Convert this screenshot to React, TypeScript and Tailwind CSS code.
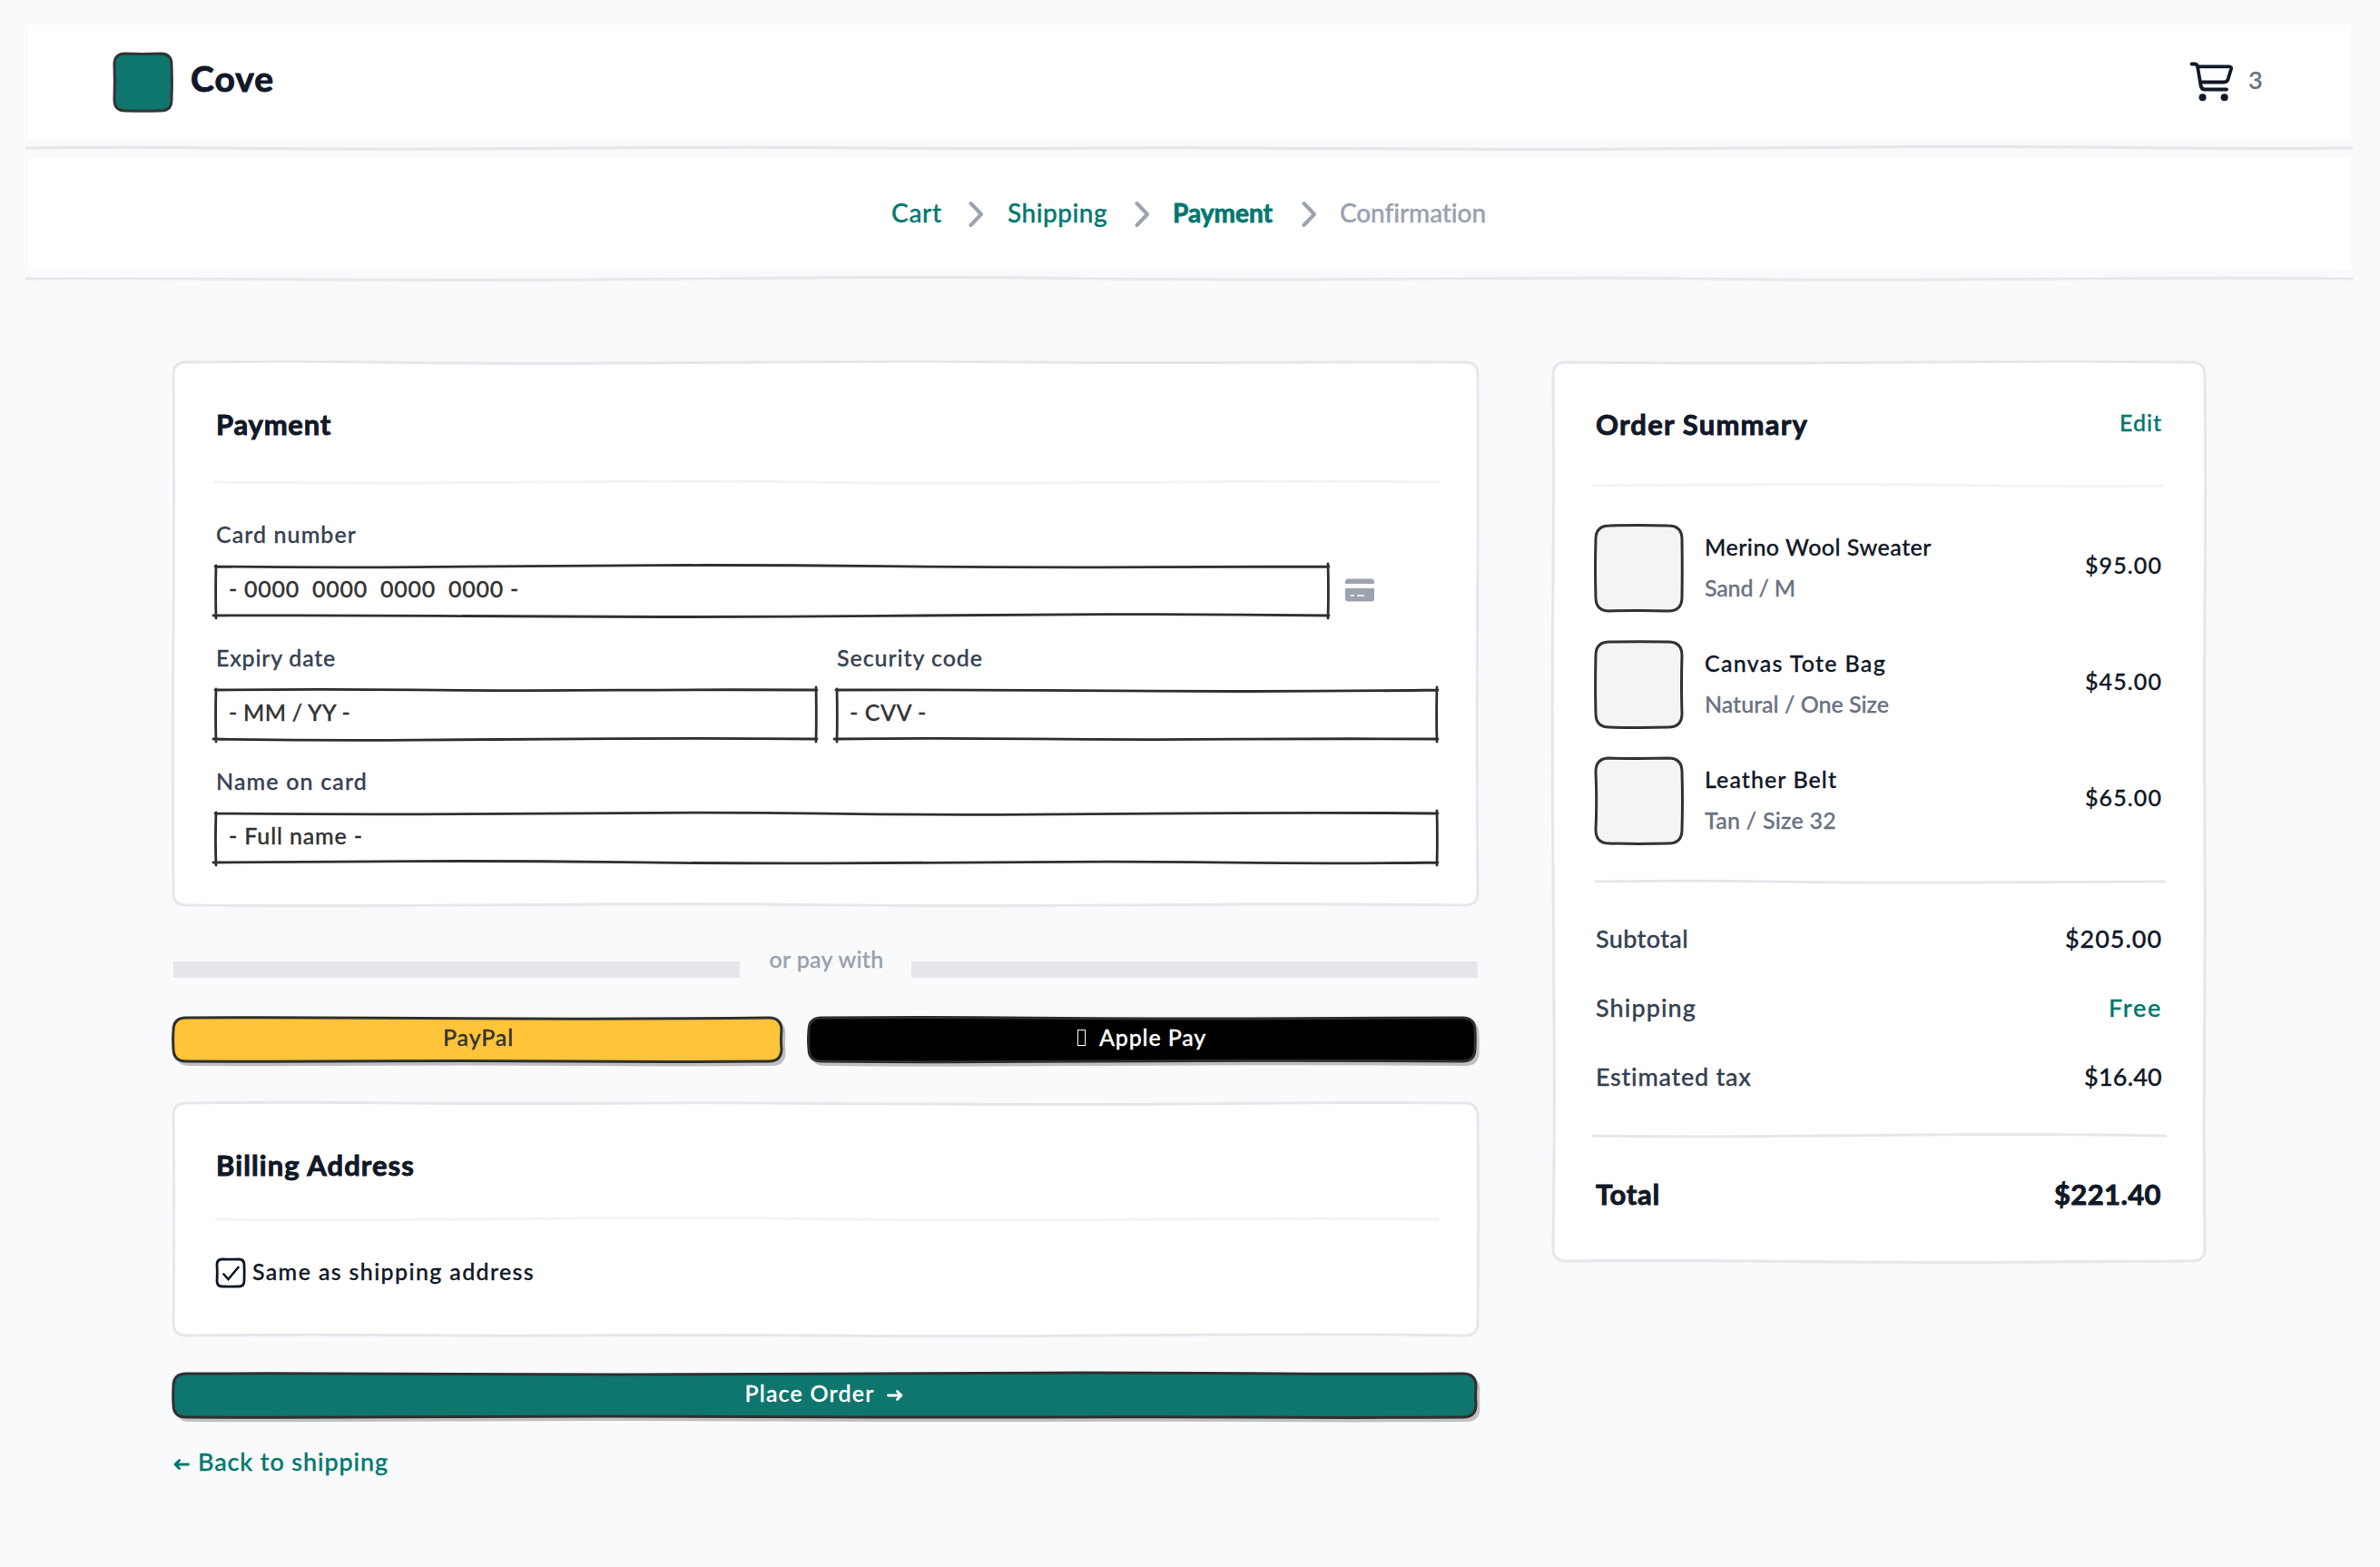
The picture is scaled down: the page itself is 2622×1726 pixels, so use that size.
import { useLayoutEffect, useRef, useState } from "react";
import clsx from "clsx";

const INK = "#2f2f2f";
const LINE = "#e5e7eb";
const FAINT = "#f3f4f6";

// sideways offsets for the hand drawn edges
const WOBBLE = [1.6, -1, -1.8, 1.2, 0.6, -1.4, 1.8, 0.4, -1.2, 1, -0.6, 1.4];

// wavy line from the current point to x2,y2
function edge(x1: number, y1: number, x2: number, y2: number, seed: number, amp = 1) {
  const dx = x2 - x1;
  const dy = y2 - y1;
  const len = Math.hypot(dx, dy);
  const n = Math.max(1, Math.round(len / 240));
  const at = (i: number) => {
    const t = (i + 0.5) / n;
    const o = WOBBLE[(seed * 5 + i) % WOBBLE.length] * amp;
    return [x1 + dx * t - (dy / len) * o, y1 + dy * t + (dx / len) * o];
  };
  let d = "";
  for (let i = 0; i < n; i++) {
    const [cx, cy] = at(i);
    if (i === n - 1) {
      d += `Q${cx} ${cy} ${x2} ${y2}`;
    } else {
      const [nx, ny] = at(i + 1);
      d += `Q${cx} ${cy} ${(cx + nx) / 2} ${(cy + ny) / 2}`;
    }
  }
  return d;
}

function roundedPath(w: number, h: number, r: number, seed: number, amp: number) {
  return [
    `M${r} 0`,
    edge(r, 0, w - r, 0, seed, amp),
    `Q${w} 0 ${w} ${r}`,
    edge(w, r, w, h - r, seed + 1, amp),
    `Q${w} ${h} ${w - r} ${h}`,
    edge(w - r, h, r, h, seed + 2, amp),
    `Q0 ${h} 0 ${h - r}`,
    edge(0, h - r, 0, r, seed + 3, amp),
    `Q0 0 ${r} 0Z`,
  ].join(" ");
}

// four separate strokes that overshoot the corners a little
function inputPath(w: number, h: number, seed: number) {
  return [
    "M-1 0" + edge(-1, 0, w + 1, 0, seed),
    `M${w} -3` + edge(w, -3, w, h + 3, seed + 1, 0.6),
    `M-3 ${h}` + edge(-3, h, w + 1, h, seed + 2),
    "M0 -1" + edge(0, -1, 0, h + 3, seed + 3, 0.6),
  ].join(" ");
}

type FrameProps = {
  w: number;
  h: number;
  r?: number;
  seed?: number;
  amp?: number;
  fill?: string;
  stroke?: string;
  shadow?: boolean;
  sw?: number;
};

function Frame({ w, h, r = 14, seed = 0, amp = 1, fill = "#fff", stroke = LINE, shadow, sw = 3 }: FrameProps) {
  const d = roundedPath(w, h, r, seed, amp);
  return (
    <svg className="absolute top-0 left-0 overflow-visible" width={w} height={h} fill="none">
      {shadow && <path d={d} transform="translate(3.5 4)" fill="#c0c0c0" stroke="#c0c0c0" strokeWidth={2} />}
      <path d={d} fill={fill} stroke={stroke} strokeWidth={sw} />
    </svg>
  );
}

function Rule({ w, seed = 0, color = LINE, className }: { w: number; seed?: number; color?: string; className?: string }) {
  return (
    <svg className={clsx("block shrink-0 overflow-visible", className)} width={w} height={8} fill="none">
      <path d={"M0 4" + edge(0, 4, w, 4, seed)} stroke={color} strokeWidth={3} />
    </svg>
  );
}

// Spreads the letters so the word fills the given width
function Text({ w, children, className }: { w: number; children: string; className?: string }) {
  const ref = useRef<HTMLSpanElement>(null);
  const [spacing, setSpacing] = useState(0);

  useLayoutEffect(() => {
    if (!ref.current) return;
    const natural = ref.current.getBoundingClientRect().width;
    setSpacing((w + 2 - natural) / children.length);
  }, [w, children]);

  return (
    <span ref={ref} className={clsx("inline-block shrink-0 whitespace-pre", className)} style={{ letterSpacing: spacing }}>
      {children}
    </span>
  );
}

function CartIcon() {
  return (
    <svg width="50" height="46" viewBox="0 0 50 46" fill="none" stroke="#111827" strokeWidth="3.8" strokeLinecap="round" strokeLinejoin="round">
      <path d="M3.5 3.5H6.5C8.6 3.5 9.6 4.5 10 6.3L13.6 27.5C14.2 30.4 15.5 31.5 18 31.5H42" />
      <path d="M10 6.3H45C46.6 6.3 47.4 7.4 47 9L43.5 20.4C42.7 22.8 41.5 23.5 39.5 23.5H13" />
      <circle cx="15.5" cy="40.2" r="4" fill="#111827" stroke="none" />
      <circle cx="39.6" cy="40.2" r="4" fill="#111827" stroke="none" />
    </svg>
  );
}

function CardIcon() {
  return (
    <svg className="-mt-[2px]" width="32" height="26" viewBox="0 0 32 26" fill="#9ca3af">
      <path d="M0 6V4Q0 0.5 3.5 0.5H28.5Q32 0.5 32 4V6Z" />
      <path fillRule="evenodd" d="M0 11H32V22Q32 25.5 28.5 25.5H3.5Q0 25.5 0 22ZM5.5 18.2V19.8H10V18.2ZM13 18.2V19.8H21V18.2Z" />
    </svg>
  );
}

function Chevron() {
  return (
    <svg className="shrink-0" width="17" height="30" viewBox="0 0 17 30" fill="none" stroke="#9ca3af" strokeWidth="4" strokeLinecap="round" strokeLinejoin="round">
      <path d="M2.5 3L14 15L2.5 27" />
    </svg>
  );
}

function Arrow({ left, className }: { left?: boolean; className?: string }) {
  return (
    <svg className={clsx("shrink-0", className, left && "rotate-180")} width="18" height="14" viewBox="0 0 18 14" fill="none" stroke="currentColor" strokeWidth="2.8" strokeLinecap="round" strokeLinejoin="round">
      <path d="M1.5 7H16M11.4 2.4L16 7L11.4 11.6" />
    </svg>
  );
}

function Input({ w, seed, text, textW }: { w: number; seed: number; text: string; textW: number }) {
  return (
    <div className="relative -ml-px h-[54px]" style={{ width: w }}>
      <svg className="absolute top-0 left-0 overflow-visible" width={w} height={54} fill="none">
        <path d={inputPath(w, 54, seed)} stroke={INK} strokeWidth={2.8} strokeLinecap="round" />
      </svg>
      <div className="relative flex h-full items-center pb-[5px] pl-[14px] text-[25px] text-[#333]">
        <Text w={textW}>{text}</Text>
      </div>
    </div>
  );
}

function FieldLabel({ w, children }: { w: number; children: string }) {
  return (
    <div className="-ml-px h-[30px] text-[25px] leading-[30px] text-gray-700">
      <Text w={w}>{children}</Text>
    </div>
  );
}

const items = [
  { name: "Merino Wool Sweater", nameW: 248, meta: "Sand / M", metaW: 98, price: "$95.00" },
  { name: "Canvas Tote Bag", nameW: 198, meta: "Natural / One Size", metaW: 201, price: "$45.00" },
  { name: "Leather Belt", nameW: 144, meta: "Tan / Size 32", metaW: 143, price: "$65.00" },
];

const totals = [
  { label: "Subtotal", labelW: 100, value: "$205.00", valueW: 105 },
  { label: "Shipping", labelW: 109, value: "Free", valueW: 57, free: true },
  { label: "Estimated tax", labelW: 170, value: "$16.40", valueW: 84 },
];

const heading = "text-[31px] leading-[40px] font-bold [-webkit-text-stroke:0.9px]";

export default function App() {
  return (
    <div className="h-[1726px] w-[2622px] overflow-hidden bg-[#f9fafb] px-[30px] pt-[27px] font-['Lato','Liberation_Sans',sans-serif] font-medium text-[#111827] [-webkit-text-stroke:0.3px]">
      <header className="ml-px flex h-[126px] w-[2559px] items-center justify-between bg-white pr-[95px] pl-[95px]">
        <div className="flex items-center gap-[21px]">
          <div className="relative size-[63px]">
            <Frame w={63} h={63} r={12} amp={0.6} fill="#0f766e" stroke="#333" />
          </div>
          <Text w={90} className="pb-[8px] text-[39px] font-bold [-webkit-text-stroke:1px]">Cove</Text>
        </div>
        <div className="flex items-center gap-[16px]">
          <CartIcon />
          <Text w={16} className="pb-[4px] text-[27px] text-gray-500">3</Text>
        </div>
      </header>
      <Rule w={2564} seed={1} className="mt-[6px] -ml-[2px]" />

      <nav className="mt-[7px] ml-px flex h-[123px] w-[2559px] items-center bg-white pl-[951px] text-[28px] text-teal-700">
        <Text w={54} className="mr-[29px] pb-[4px]">Cart</Text>
        <Chevron />
        <Text w={108} className="mr-[30px] ml-[26px] pb-[4px]">Shipping</Text>
        <Chevron />
        <Text w={108} className="mr-[32px] ml-[25px] pb-[4px] font-bold [-webkit-text-stroke:0.8px]">Payment</Text>
        <Chevron />
        <Text w={159} className="ml-[25px] pb-[4px] text-gray-400">Confirmation</Text>
      </nav>
      <Rule w={2564} seed={2} className="mt-[6px] -ml-[2px]" />

      <main className="mt-[88px] flex gap-[83px] pl-[161px]">
        <div className="w-[1437px] shrink-0">
          <section className="relative h-[598px]">
            <Frame w={1437} h={598} seed={1} />
            <div className="relative pt-[48px] pl-[48px]">
              <h2 className={clsx("-ml-px h-[40px]", heading)}>
                <Text w={125}>Payment</Text>
              </h2>
              <Rule w={1351} seed={3} color={FAINT} className="mt-[40px] -ml-[4px]" />

              <div className="mt-[38px] flex flex-col gap-[21px]">
                <FieldLabel w={153}>Card number</FieldLabel>
                <div className="flex items-center gap-[19px]">
                  <Input w={1225} seed={0} text="- 0000  0000  0000  0000 -" textW={318} />
                  <CardIcon />
                </div>
              </div>
              <div className="mt-[31px] flex gap-[24px]">
                <div className="flex w-[660px] flex-col gap-[21px]">
                  <FieldLabel w={130}>Expiry date</FieldLabel>
                  <Input w={661} seed={4} text="- MM / YY -" textW={132} />
                </div>
                <div className="flex w-[661px] flex-col gap-[21px]">
                  <FieldLabel w={159}>Security code</FieldLabel>
                  <Input w={661} seed={2} text="- CVV -" textW={83} />
                </div>
              </div>
              <div className="mt-[31px] flex flex-col gap-[21px]">
                <FieldLabel w={165}>Name on card</FieldLabel>
                <Input w={1345} seed={3} text="- Full name -" textW={146} />
              </div>
            </div>
          </section>

          <div className="mt-[44px] flex h-[36px] items-start text-[25px] leading-[30px] text-gray-400">
            <div className="mt-[18px] h-[18px] w-[624px] bg-gray-200" />
            <div className="w-[190px] pl-[33px]">
              <Text w={124}>or pay with</Text>
            </div>
            <div className="mt-[18px] h-[18px] w-[624px] bg-gray-200" />
          </div>

          <div className="mt-[44px] flex h-[48px] gap-[30px] text-[25px]">
            <button className="relative w-[670px]">
              <Frame w={670} h={48} seed={2} amp={0.8} fill="#ffc439" stroke={INK} shadow />
              <span className="relative flex h-full items-center justify-center pb-[5px] pl-[2px] text-[#333]">
                <Text w={76}>PayPal</Text>
              </span>
            </button>
            <button className="relative w-[734px]">
              <Frame w={734} h={48} seed={1} amp={0.8} fill="#000" stroke={INK} shadow />
              <span className="relative flex h-full items-center justify-center gap-[15px] pb-[5px] text-white">
                <span className="h-[18px] w-[9px] border border-white" />
                <Text w={116}>Apple Pay</Text>
              </span>
            </button>
          </div>

          <section className="relative mt-[46px] h-[256px]">
            <Frame w={1437} h={256} seed={4} />
            <div className="relative pt-[48px] pl-[48px]">
              <h2 className={clsx("-ml-px h-[40px]", heading)}>
                <Text w={217}>Billing Address</Text>
              </h2>
              <Rule w={1348} seed={0} color={FAINT} className="mt-[36px] -ml-[2px]" />
              <label className="mt-[39px] flex h-[32px] items-center text-[25px]">
                <span className="relative size-[30px]">
                  <Frame w={30} h={30} r={6} amp={0.3} seed={3} stroke="#111827" sw={2.8} />
                  <svg className="absolute inset-0" width="30" height="30" fill="none" stroke="#111827" strokeWidth="2.6" strokeLinecap="round">
                    <path d="M7.5 16.5L12.5 22L23.5 9" />
                  </svg>
                </span>
                <Text w={309} className="ml-[9px] pb-[3px]">Same as shipping address</Text>
              </label>
            </div>
          </section>

          <button className="relative mt-[42px] block h-[48px] w-[1435px] text-[25px] text-white">
            <Frame w={1435} h={48} seed={2} amp={0.6} fill="#0f766e" stroke={INK} shadow />
            <span className="relative flex h-full items-center justify-center gap-[13px] pr-[2px] pb-[5px]">
              <Text w={141}>Place Order</Text>
              <Arrow className="mt-[4px]" />
            </span>
          </button>

          <a className="mt-[33px] flex h-[32px] items-center gap-[9px] text-[27px] leading-[32px] text-teal-700">
            <Arrow left className="mt-[6px]" />
            <Text w={208}>Back to shipping</Text>
          </a>
        </div>

        <aside className="relative h-[991px] w-[718px] shrink-0">
          <Frame w={718} h={990} seed={3} />
          <div className="relative pt-[48px] pr-[47px] pl-[47px]">
            <div className="flex h-[40px] items-center justify-between">
              <h2 className={heading}>
                <Text w={232}>Order Summary</Text>
              </h2>
              <Text w={45} className="pb-[2px] text-[25px] text-teal-700">Edit</Text>
            </div>
            <Rule w={630} seed={5} color={FAINT} className="mt-[44px] -ml-[4px]" />

            <div className="mt-[40px] flex flex-col gap-[32px]">
              {items.map((item, i) => (
                <div key={item.name} className="flex h-[96px] text-[25px] leading-[30px]">
                  <div className="relative size-[96px]">
                    <Frame w={95} h={94} r={15} seed={i + 1} amp={0.8} fill={FAINT} stroke="#333" />
                  </div>
                  <div className="ml-[24px] flex flex-1 flex-col items-start gap-[15px] pt-[8px]">
                    <Text w={item.nameW}>{item.name}</Text>
                    <Text w={item.metaW} className="text-gray-500">{item.meta}</Text>
                  </div>
                  <Text w={83} className="pt-[28px]">{item.price}</Text>
                </div>
              ))}
            </div>
            <Rule w={629} seed={1} className="mt-[36px] -ml-px" />

            <div className="mt-[44px] flex flex-col gap-[46px] text-[27px] leading-[30px]">
              {totals.map((row) => (
                <div key={row.label} className="flex h-[30px] justify-between">
                  <Text w={row.labelW} className="text-gray-700">{row.label}</Text>
                  <Text w={row.valueW} className={row.free ? "text-teal-700" : ""}>{row.value}</Text>
                </div>
              ))}
            </div>
            <Rule w={633} seed={0} className="mt-[46px] -ml-[4px]" />

            <div className={clsx("mt-[40px] flex h-[40px] justify-between pr-px", heading)}>
              <Text w={69}>Total</Text>
              <Text w={116}>$221.40</Text>
            </div>
          </div>
        </aside>
      </main>
    </div>
  );
}
